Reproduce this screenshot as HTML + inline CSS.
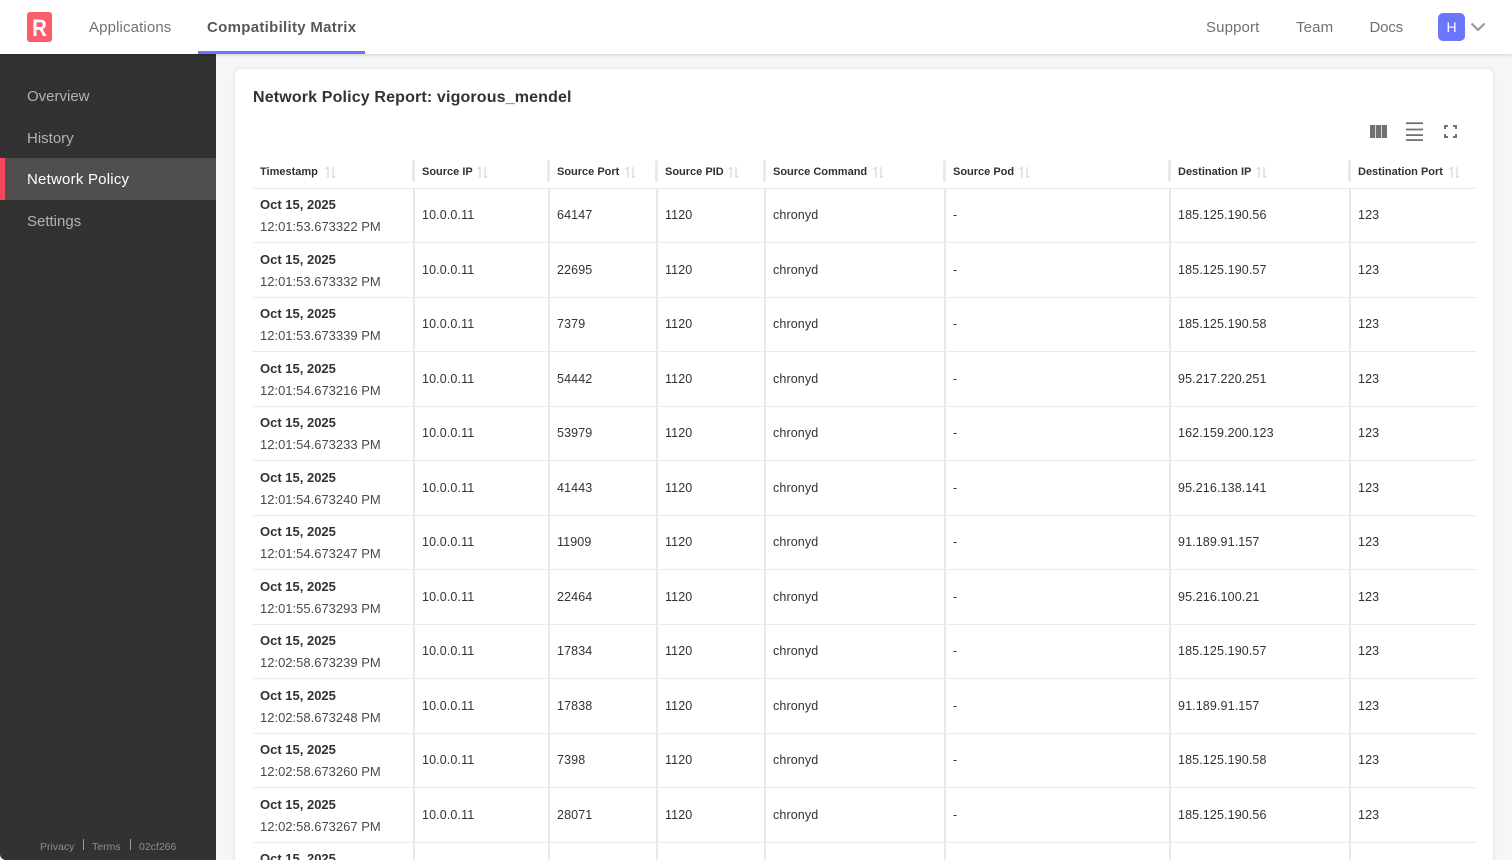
<!DOCTYPE html>
<html><head><meta charset="utf-8"><title>Network Policy</title>
<style>
*{box-sizing:border-box}
html,body{margin:0;padding:0;width:1512px;height:860px;overflow:hidden}
#wrap{position:relative;width:1512px;height:860px;overflow:hidden;background:#f5f6f8;font-family:"Liberation Sans",sans-serif;color:#323232}
.abs{position:absolute;white-space:nowrap}
#top{position:absolute;left:0;top:0;width:1512px;height:54px;background:#fff;box-shadow:0 1px 4px rgba(0,0,0,.16);z-index:5}
.nav{position:absolute;top:18px;font-size:15px;line-height:20px;color:#717171;white-space:nowrap;letter-spacing:.13px}
#side{position:absolute;left:0;top:54px;width:216px;height:806px;background:#323232;border-bottom-left-radius:6px}
.si{position:absolute;left:27px;font-size:15px;line-height:20px;color:#b0b3b3;letter-spacing:0;white-space:nowrap}
#card{position:absolute;left:235px;top:69px;width:1258px;height:820px;background:#fff;border-radius:5px;box-shadow:0 0 4px rgba(0,0,0,.12)}
.h{position:absolute;top:166px;font-size:11px;line-height:13px;font-weight:bold;color:#323232;white-space:nowrap}
.sort{position:absolute;top:166px}
.hs{position:absolute;top:160px;width:3px;height:22px;background:#eaeaea;border-radius:1px}
.line{position:absolute;left:253px;width:1223px;height:1px;background:#ebebeb}
.v{position:absolute;top:189px;width:2px;height:680px;background:#e8e8e8}
.r{position:absolute;left:0;width:1512px;height:54.5px;font-size:12.5px;color:#323232}
.r span{position:absolute;top:19px;line-height:15px;white-space:nowrap;letter-spacing:.12px}
.r b{position:absolute;left:260px;top:7px;line-height:17px;font-size:13px;color:#323232;white-space:nowrap}
.r i{position:absolute;left:260px;top:29px;line-height:17px;font-size:13px;font-style:normal;color:#4a4a4a;white-space:nowrap}
.a{left:422px}.b{left:557px}.c{left:665px}.d{left:773px}.e{left:953px}.f{left:1178px}.g{left:1358px}
</style></head><body><div id="wrap">

<div id="top">
  <svg class="abs" style="left:27px;top:12px" width="26" height="30" viewBox="0 0 26 30"><rect x="0" y="0" width="25" height="30" rx="3" fill="#fd5c6b"/><text transform="translate(12.500 24) scale(.85 1)" font-family="Liberation Sans" font-weight="bold" font-size="24" fill="#fff" text-anchor="middle">R</text></svg>
  <div class="nav" style="left:89px">Applications</div>
  <div class="nav" style="left:207px;font-weight:bold;color:#585858;letter-spacing:.3px">Compatibility Matrix</div>
  <div class="abs" style="left:198px;top:51px;width:167px;height:3px;background:#6a77fb"></div>
  <div class="nav" style="left:1206px">Support</div>
  <div class="nav" style="left:1296px">Team</div>
  <div class="nav" style="left:1369.500px;letter-spacing:-.2px">Docs</div>
  <div class="abs" style="left:1438px;top:13px;width:27px;height:28px;background:#6a77fb;border-radius:5px;color:#fff;font-size:14px;line-height:28px;text-align:center">H</div>
  <svg class="abs" style="left:1470px;top:21px" width="16" height="12" viewBox="0 0 16 12"><path d="M1.500 2.500L8 9l6.500-6.500" fill="none" stroke="#9b9b9b" stroke-width="2.200"/></svg>
</div>

<div id="side">
  <div class="si" style="top:33px">Overview</div>
  <div class="si" style="top:75px">History</div>
  <div class="abs" style="left:0;top:104px;width:216px;height:42px;background:#4f4f4f"></div>
  <div class="abs" style="left:0;top:104px;width:5px;height:42px;background:#f7475a"></div>
  <div class="si" style="top:116px;color:#fff;letter-spacing:.22px">Network Policy</div>
  <div class="si" style="top:158px">Settings</div>
  <div class="abs" style="left:40px;top:786px;font-size:10.500px;line-height:14px;color:#8d8d8d">Privacy</div>
  <div class="abs" style="left:83px;top:785px;width:1px;height:11px;background:#9a9a9a"></div>
  <div class="abs" style="left:92px;top:786px;font-size:10.500px;line-height:14px;color:#8d8d8d">Terms</div>
  <div class="abs" style="left:130px;top:785px;width:1px;height:11px;background:#9a9a9a"></div>
  <div class="abs" style="left:139px;top:786px;font-size:10.500px;line-height:14px;color:#8d8d8d">02cf266</div>
</div>

<div id="card"></div>
<div class="abs" style="left:253px;top:87px;font-size:16px;line-height:21px;font-weight:bold;color:#323232;letter-spacing:.15px">Network Policy Report: vigorous_mendel</div>

<svg class="abs" style="left:1370px;top:125px" width="17" height="13" viewBox="0 0 17 13" fill="#717171"><rect x="0" y="0" width="5.300" height="13"/><rect x="6" y="0" width="5" height="13"/><rect x="11.700" y="0" width="5.300" height="13"/></svg>
<svg class="abs" style="left:1406px;top:122px" width="17" height="19" viewBox="0 0 17 19" fill="#717171"><rect y="0.300" width="17" height="1.800"/><rect y="6.600" width="17" height="1.800"/><rect y="12.200" width="17" height="1.800"/><rect y="17.200" width="17" height="1.800"/></svg>
<svg class="abs" style="left:1444px;top:125px" width="13" height="13" viewBox="0 0 13 13" fill="none" stroke="#717171" stroke-width="2"><path d="M1 4V1h3M9 1h3v3M12 9v3H9M4 12H1V9"/></svg>

<div class="h" style="left:260px">Timestamp</div>
<div class="h" style="left:422px">Source IP</div>
<div class="h" style="left:557px">Source Port</div>
<div class="h" style="left:665px">Source PID</div>
<div class="h" style="left:773px">Source Command</div>
<div class="h" style="left:953px">Source Pod</div>
<div class="h" style="left:1178px">Destination IP</div>
<div class="h" style="left:1358px">Destination Port</div>

<svg width="0" height="0" style="position:absolute"><defs><g id="s"><path d="M3 12V1M3 1L.8 3.200M8 1v11M8 12l2.200-2.200" fill="none" stroke="#d6d8d8" stroke-width="1.200"/></g></defs></svg>
<svg class="sort" style="left:325px" width="11" height="13"><use href="#s"/></svg>
<svg class="sort" style="left:477px" width="11" height="13"><use href="#s"/></svg>
<svg class="sort" style="left:625px" width="11" height="13"><use href="#s"/></svg>
<svg class="sort" style="left:728px" width="11" height="13"><use href="#s"/></svg>
<svg class="sort" style="left:873px" width="11" height="13"><use href="#s"/></svg>
<svg class="sort" style="left:1019px" width="11" height="13"><use href="#s"/></svg>
<svg class="sort" style="left:1256px" width="11" height="13"><use href="#s"/></svg>
<svg class="sort" style="left:1449px" width="11" height="13"><use href="#s"/></svg>

<div class="hs" style="left:412px"></div>
<div class="hs" style="left:547px"></div>
<div class="hs" style="left:655px"></div>
<div class="hs" style="left:763px"></div>
<div class="hs" style="left:943px"></div>
<div class="hs" style="left:1168px"></div>
<div class="hs" style="left:1348px"></div>

<div class="v" style="left:413px"></div>
<div class="v" style="left:548px"></div>
<div class="v" style="left:656px"></div>
<div class="v" style="left:764px"></div>
<div class="v" style="left:944px"></div>
<div class="v" style="left:1169px"></div>
<div class="v" style="left:1349px"></div>

<div class="line" style="top:188px"></div>
<div class="line" style="top:242px"></div>
<div class="line" style="top:297px"></div>
<div class="line" style="top:351px"></div>
<div class="line" style="top:406px"></div>
<div class="line" style="top:460px"></div>
<div class="line" style="top:515px"></div>
<div class="line" style="top:569px"></div>
<div class="line" style="top:624px"></div>
<div class="line" style="top:678px"></div>
<div class="line" style="top:733px"></div>
<div class="line" style="top:787px"></div>
<div class="line" style="top:842px"></div>

<div class="r" style="top:189px"><b>Oct 15, 2025</b><i>12:01:53.673322 PM</i><span class="a">10.0.0.11</span><span class="b">64147</span><span class="c">1120</span><span class="d">chronyd</span><span class="e">-</span><span class="f">185.125.190.56</span><span class="g">123</span></div>
<div class="r" style="top:243.500px"><b>Oct 15, 2025</b><i>12:01:53.673332 PM</i><span class="a">10.0.0.11</span><span class="b">22695</span><span class="c">1120</span><span class="d">chronyd</span><span class="e">-</span><span class="f">185.125.190.57</span><span class="g">123</span></div>
<div class="r" style="top:298px"><b>Oct 15, 2025</b><i>12:01:53.673339 PM</i><span class="a">10.0.0.11</span><span class="b">7379</span><span class="c">1120</span><span class="d">chronyd</span><span class="e">-</span><span class="f">185.125.190.58</span><span class="g">123</span></div>
<div class="r" style="top:352.500px"><b>Oct 15, 2025</b><i>12:01:54.673216 PM</i><span class="a">10.0.0.11</span><span class="b">54442</span><span class="c">1120</span><span class="d">chronyd</span><span class="e">-</span><span class="f">95.217.220.251</span><span class="g">123</span></div>
<div class="r" style="top:407px"><b>Oct 15, 2025</b><i>12:01:54.673233 PM</i><span class="a">10.0.0.11</span><span class="b">53979</span><span class="c">1120</span><span class="d">chronyd</span><span class="e">-</span><span class="f">162.159.200.123</span><span class="g">123</span></div>
<div class="r" style="top:461.500px"><b>Oct 15, 2025</b><i>12:01:54.673240 PM</i><span class="a">10.0.0.11</span><span class="b">41443</span><span class="c">1120</span><span class="d">chronyd</span><span class="e">-</span><span class="f">95.216.138.141</span><span class="g">123</span></div>
<div class="r" style="top:516px"><b>Oct 15, 2025</b><i>12:01:54.673247 PM</i><span class="a">10.0.0.11</span><span class="b">11909</span><span class="c">1120</span><span class="d">chronyd</span><span class="e">-</span><span class="f">91.189.91.157</span><span class="g">123</span></div>
<div class="r" style="top:570.500px"><b>Oct 15, 2025</b><i>12:01:55.673293 PM</i><span class="a">10.0.0.11</span><span class="b">22464</span><span class="c">1120</span><span class="d">chronyd</span><span class="e">-</span><span class="f">95.216.100.21</span><span class="g">123</span></div>
<div class="r" style="top:625px"><b>Oct 15, 2025</b><i>12:02:58.673239 PM</i><span class="a">10.0.0.11</span><span class="b">17834</span><span class="c">1120</span><span class="d">chronyd</span><span class="e">-</span><span class="f">185.125.190.57</span><span class="g">123</span></div>
<div class="r" style="top:679.500px"><b>Oct 15, 2025</b><i>12:02:58.673248 PM</i><span class="a">10.0.0.11</span><span class="b">17838</span><span class="c">1120</span><span class="d">chronyd</span><span class="e">-</span><span class="f">91.189.91.157</span><span class="g">123</span></div>
<div class="r" style="top:734px"><b>Oct 15, 2025</b><i>12:02:58.673260 PM</i><span class="a">10.0.0.11</span><span class="b">7398</span><span class="c">1120</span><span class="d">chronyd</span><span class="e">-</span><span class="f">185.125.190.58</span><span class="g">123</span></div>
<div class="r" style="top:788.500px"><b>Oct 15, 2025</b><i>12:02:58.673267 PM</i><span class="a">10.0.0.11</span><span class="b">28071</span><span class="c">1120</span><span class="d">chronyd</span><span class="e">-</span><span class="f">185.125.190.56</span><span class="g">123</span></div>
<div class="r" style="top:843px"><b>Oct 15, 2025</b></div>

</div></body></html>
